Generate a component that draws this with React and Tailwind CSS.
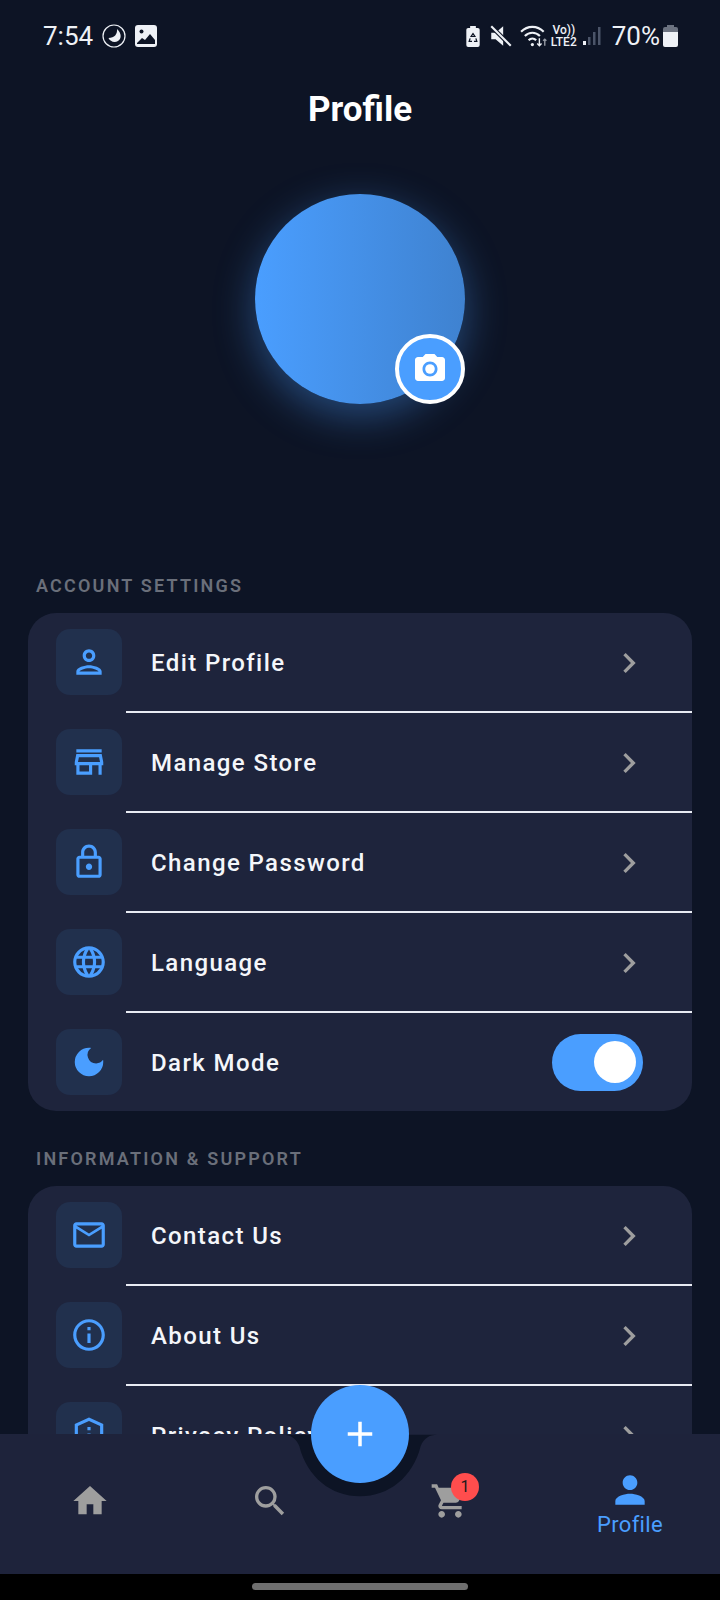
import React from 'react'
import {
  MdOutlinePerson,
  MdOutlineStore,
  MdOutlineLock,
  MdLanguage,
  MdDarkMode,
  MdOutlineEmail,
  MdInfoOutline,
  MdOutlinePrivacyTip,
  MdHome,
  MdSearch,
  MdShoppingCart,
  MdPerson,
  MdChevronRight,
  MdCameraAlt,
  MdAdd,
} from 'react-icons/md'

const accountRows = [
  { label: 'Edit Profile', icon: MdOutlinePerson },
  { label: 'Manage Store', icon: MdOutlineStore },
  { label: 'Change Password', icon: MdOutlineLock },
  { label: 'Language', icon: MdLanguage },
  { label: 'Dark Mode', icon: MdDarkMode, toggle: true },
]

const supportRows = [
  { label: 'Contact Us', icon: MdOutlineEmail },
  { label: 'About Us', icon: MdInfoOutline },
  { label: 'Privacy Policy', icon: MdOutlinePrivacyTip },
]

function StatusBar() {
  return (
    <div className="h-[72px] flex items-center justify-between pl-[43px] pr-[42px] text-[#eef1f6]">
      <div className="flex items-center">
        <span className="text-[26px] leading-none">7:54</span>
        <svg viewBox="0 0 24 24" className="w-6 h-6 ml-[9px]" fill="none">
          <circle cx="12" cy="12" r="11" stroke="currentColor" strokeWidth="1.2" />
          <path d="M15 5c.6 5-2.500 9-8.500 9 1.500 3.500 6 5 9.500 3 3.500-2 4-7.500-1-12z" fill="currentColor" />
        </svg>
        <svg viewBox="0 0 22 22" className="w-[22px] h-[22px] ml-[9px]">
          <rect x="0" y="0" width="22" height="22" rx="3" fill="currentColor" />
          <circle cx="6.500" cy="6.500" r="2" fill="#0d1425" />
          <path d="M2 18l5-5 3 2 5-6 5 6v4H2z" fill="#0d1425" />
        </svg>
      </div>
      <div className="flex items-center">
        <svg viewBox="0 0 14 22" className="w-[14px] h-[21px]">
          <path d="M4 0h6v2h2a2 2 0 0 1 2 2v16a2 2 0 0 1-2 2H2a2 2 0 0 1-2-2V4a2 2 0 0 1 2-2h2z" fill="currentColor" />
          <path d="M7 8l2 3H5zM4 13l-1 3h3M10 13l1 3H8" stroke="#0d1425" strokeWidth="1.300" fill="none" />
        </svg>
        <svg viewBox="0 0 24 24" className="w-[26px] h-[26px] ml-[8px]">
          <path d="M3 9h4l7-6v18l-7-6H3z" fill="currentColor" />
          <path d="M2 2l19 19" stroke="#0d1425" strokeWidth="4" />
          <path d="M3 3l18 18" stroke="currentColor" strokeWidth="2" />
        </svg>
        <svg viewBox="0 0 26 24" className="w-[28px] h-[26px] ml-[6px]" fill="none" stroke="currentColor" strokeWidth="2">
          <path d="M1 8c6-6 15-6 21 0M4.500 12c4-4 10-4 14 0M8 16c2-2 5-2 7 0" />
          <circle cx="11.500" cy="20" r="1.500" fill="currentColor" stroke="none" />
          <path d="M18 14v7M16 19l2 2 2-2" strokeWidth="1.300" />
          <path d="M23 21v-6M21.500 16.500L23 15l1.500 1.500" strokeWidth="1.300" opacity="0.6" />
        </svg>
        <div className="ml-[3px] flex flex-col items-center text-[12px] leading-[12px] font-medium">
          <span>Vo))</span>
          <span>LTE2</span>
        </div>
        <svg viewBox="0 0 18 20" className="w-[18px] h-[20px] ml-[6px]">
          <rect x="0" y="15" width="3" height="4" fill="currentColor" />
          <rect x="5" y="11" width="2.500" height="8" fill="#4b5468" />
          <rect x="10" y="6" width="2.500" height="13" fill="#4b5468" />
          <rect x="15" y="1" width="2.500" height="18" fill="#4b5468" />
        </svg>
        <span className="text-[26px] leading-none ml-[11px]">70%</span>
        <svg viewBox="0 0 15 22" className="w-[15px] h-[22px] ml-[3px]">
          <path d="M4 0h7v2h2a2 2 0 0 1 2 2v3H0V4a2 2 0 0 1 2-2h2z" fill="#6b7280" />
          <path d="M0 7h15v13a2 2 0 0 1-2 2H2a2 2 0 0 1-2-2z" fill="currentColor" />
        </svg>
      </div>
    </div>
  )
}

function SettingRow({ row, last }) {
  const Icon = row.icon
  return (
    <>
      <div className="h-[98px] flex items-center pl-[28px] pr-[49px]">
        <div className="w-[66px] h-[66px] rounded-[14px] bg-[#21304d] flex items-center justify-center shrink-0">
          <Icon className="w-[38px] h-[38px] text-[#4a9eff]" />
        </div>
        <span className="ml-[29px] pt-[1px] flex-1 text-[24px] font-medium tracking-[1.4px] text-[#f4f6fa]">{row.label}</span>
        {row.toggle ? (
          <div className="w-[91px] h-[57px] rounded-full bg-[#4a9eff] flex items-center justify-end pr-[7px]">
            <div className="w-[42px] h-[42px] rounded-full bg-white" />
          </div>
        ) : (
          <MdChevronRight className="w-[40px] h-[40px] mt-[2px] text-[#9e9e9e] -mr-[6px]" />
        )}
      </div>
      {!last && <div className="h-[2px] ml-[98px] bg-[#e8ebf3]" />}
    </>
  )
}

function Section({ title, rows, openEnd }) {
  return (
    <div>
      <div className="pl-[36px] h-[23px] flex items-center text-[18px] font-semibold tracking-[2.2px] text-[#6a6f7a]">{title}</div>
      <div className="mx-[28px] mt-[16px] rounded-[28px] bg-[#1e243c] overflow-hidden">
        {rows.map((row, i) => (
          <SettingRow key={row.label} row={row} last={i === rows.length - 1 && !openEnd} />
        ))}
      </div>
    </div>
  )
}

function BottomNav() {
  return (
    <div className="relative h-[140px] shrink-0 bg-[#1e233b] grid grid-cols-4">
      <svg viewBox="0 0 160 66" className="absolute left-[283px] top-0 w-[154px] h-[65px]">
        <path d="M0 0C8 0 14 4 17 12 25 44 50 64 80 64S135 44 143 12C146 4 152 0 160 0Z" fill="#0d1425" />
      </svg>
      <div className="flex items-center justify-center pb-[6px]">
        <MdHome className="w-[40px] h-[40px] text-[#9e9e9e]" />
      </div>
      <div className="flex items-center justify-center pb-[6px]">
        <MdSearch className="w-[40px] h-[40px] text-[#9e9e9e]" />
      </div>
      <div className="flex items-center justify-center pb-[6px]">
        <div className="relative">
          <MdShoppingCart className="w-[40px] h-[40px] text-[#9e9e9e]" />
          <div className="absolute -top-[8px] -right-[9px] w-[28px] h-[28px] rounded-full bg-[#ff4d4d] flex items-center justify-center text-[16px] text-[#1a1a1a]">1</div>
        </div>
      </div>
      <div className="flex flex-col items-center justify-center pb-[3px] text-[#4a9eff]">
        <MdPerson className="w-[44px] h-[44px]" />
        <span className="text-[22px] leading-[26px] tracking-[0.3px]">Profile</span>
      </div>
    </div>
  )
}

export default function App() {
  return (
    <div className="relative w-[720px] h-[1600px] overflow-hidden flex flex-col bg-[#0d1425] font-['Roboto',sans-serif]">
      <div className="flex-1 min-h-0 overflow-hidden">
        <StatusBar />
        <h1 className="h-[76px] flex items-center justify-center text-[35px] font-bold text-white">Profile</h1>
        <div className="mt-[46px] flex justify-center">
          <div className="relative w-[210px] h-[210px] rounded-full bg-gradient-to-r from-[#4a9eff] to-[#3f82d0] shadow-[0_12px_40px_rgba(74,158,255,0.4)]">
            <div className="absolute right-0 bottom-0 w-[70px] h-[70px] rounded-full bg-[#4a9eff] border-4 border-white flex items-center justify-center">
              <MdCameraAlt className="w-[36px] h-[36px] text-white" />
            </div>
          </div>
        </div>
        <div className="mt-[170px]">
          <Section title="ACCOUNT SETTINGS" rows={accountRows} />
        </div>
        <div className="mt-[36px]">
          <Section title="INFORMATION & SUPPORT" rows={supportRows} />
        </div>
      </div>
      <BottomNav />
      <div className="h-[26px] shrink-0 bg-black flex justify-center pt-[9px]">
        <div className="w-[216px] h-[7px] rounded-full bg-[#6f6f6f]" />
      </div>
      <div className="absolute left-[311px] top-[1385px] w-[98px] h-[98px] rounded-full bg-[#4a9eff] flex items-center justify-center">
        <MdAdd className="w-[42px] h-[42px] text-white" />
      </div>
    </div>
  )
}
